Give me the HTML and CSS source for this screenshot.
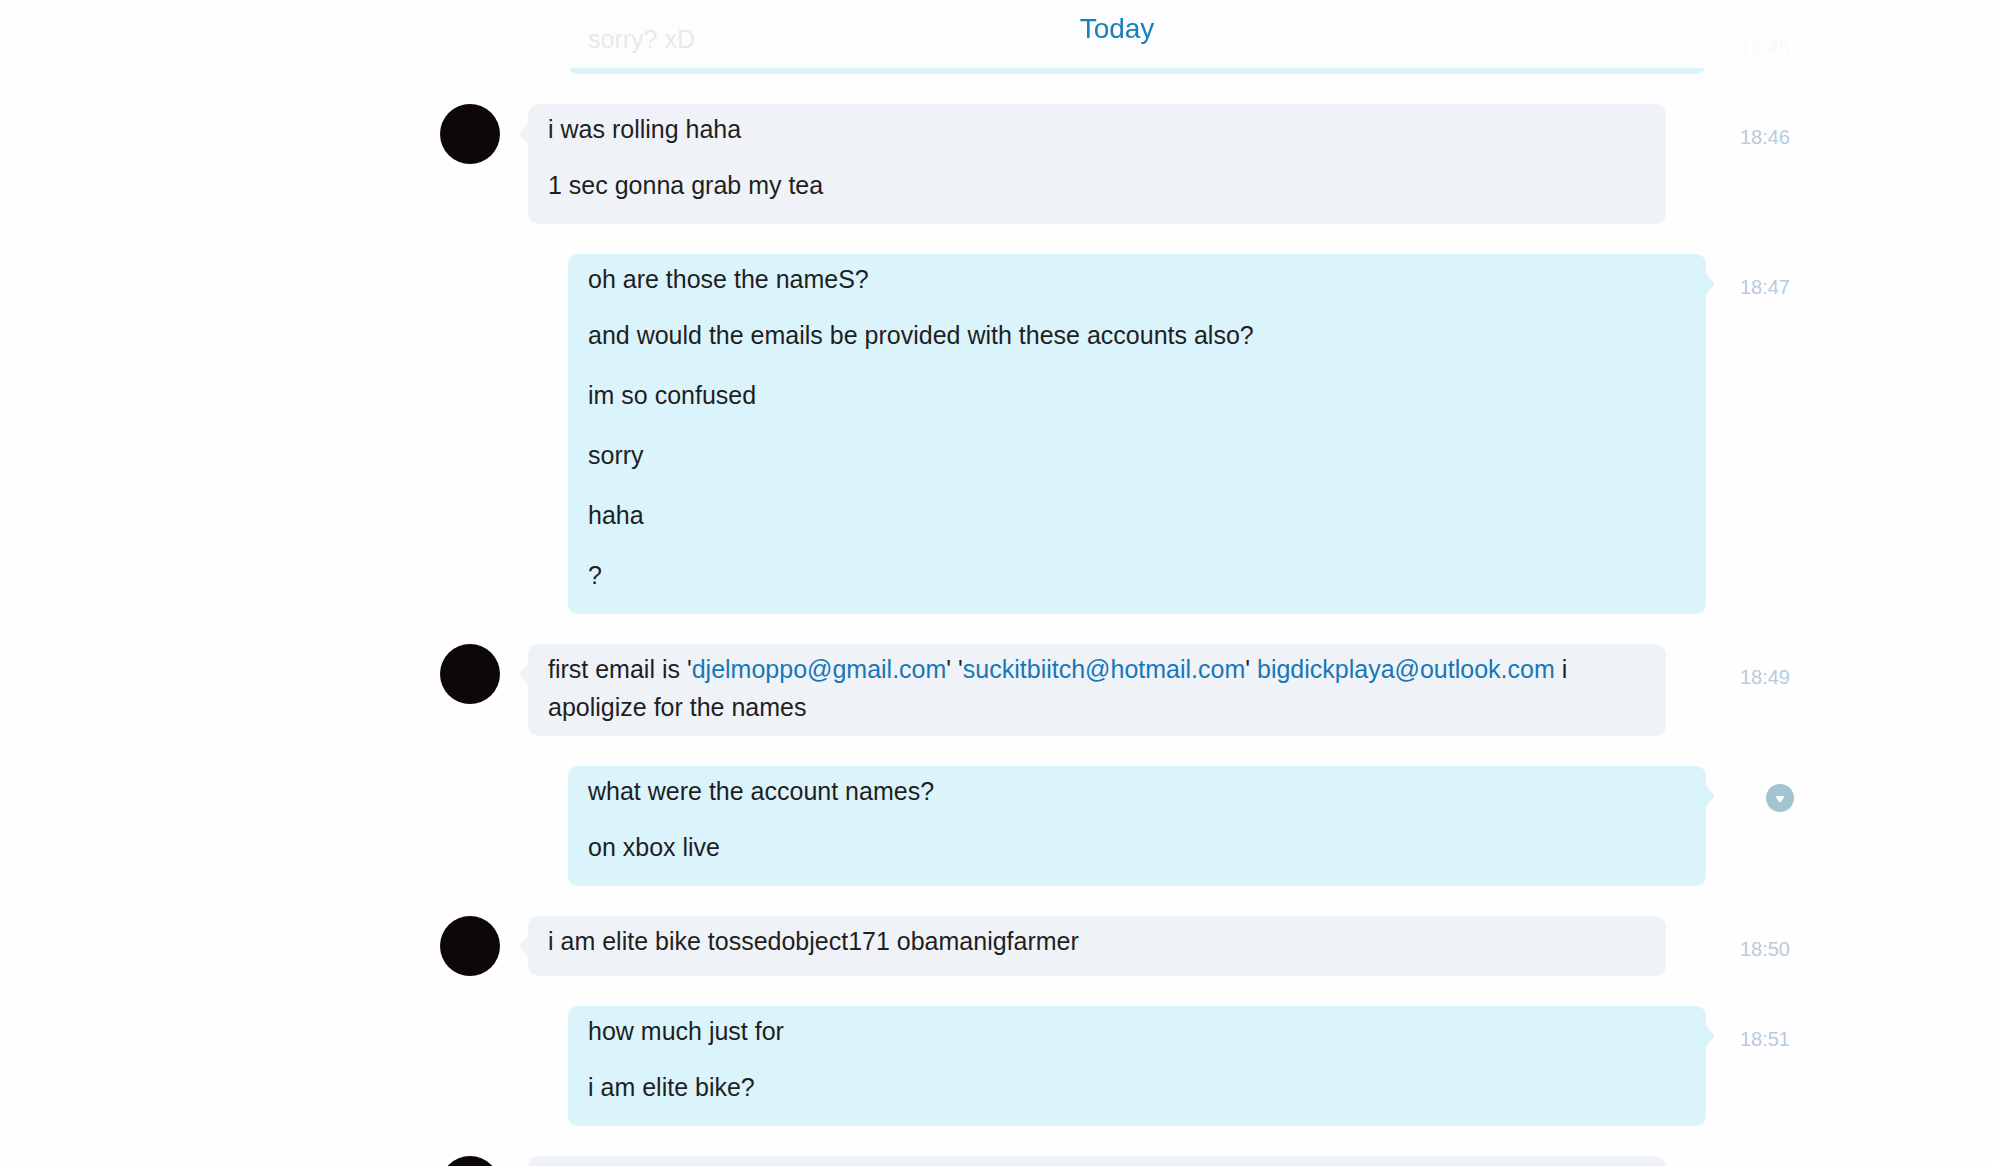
FILE: index.html
```html
<!DOCTYPE html>
<html lang="en">
<head>
<meta charset="utf-8">
<meta name="viewport" content="width=device-width, initial-scale=1">
<title>Conversation</title>
<link rel="stylesheet" href="styles.css">
</head>
<body>
<main class="chat">
  <header class="day"><h1 class="day-label">Today</h1></header>

  <section class="turn mine">
    <div class="bubble">
      <svg class="tail" viewBox="0 0 8 32" aria-hidden="true"><path d="M0 0C0 5 1 8 4 10.500L6.500 13Q8 14.500 8 16Q8 17.500 6.500 19L4 21.500C1 24 0 27 0 32Z"/></svg>
      <p class="message">sorry? xD</p>
    </div>
    <time class="time">18:45</time>
  </section>

  <section class="turn theirs">
    <div class="avatar"></div>
    <div class="bubble">
      <svg class="tail" viewBox="0 0 8 32" aria-hidden="true"><path d="M8 0C8 5 7 8 4 10.500L1.500 13Q0 14.500 0 16Q0 17.500 1.500 19L4 21.500C7 24 8 27 8 32Z"/></svg>
      <p class="message">i was rolling haha</p>
      <p class="message">1 sec gonna grab my tea</p>
    </div>
    <time class="time">18:46</time>
  </section>

  <section class="turn mine">
    <div class="bubble">
      <svg class="tail" viewBox="0 0 8 32" aria-hidden="true"><path d="M0 0C0 5 1 8 4 10.500L6.500 13Q8 14.500 8 16Q8 17.500 6.500 19L4 21.500C1 24 0 27 0 32Z"/></svg>
      <p class="message">oh are those the nameS?</p>
      <p class="message">and would the emails be provided with these accounts also?</p>
      <p class="message">im so confused</p>
      <p class="message">sorry</p>
      <p class="message">haha</p>
      <p class="message">?</p>
    </div>
    <time class="time">18:47</time>
  </section>

  <section class="turn theirs">
    <div class="avatar"></div>
    <div class="bubble">
      <svg class="tail" viewBox="0 0 8 32" aria-hidden="true"><path d="M8 0C8 5 7 8 4 10.500L1.500 13Q0 14.500 0 16Q0 17.500 1.500 19L4 21.500C7 24 8 27 8 32Z"/></svg>
      <p class="message">first email is '<a href="mailto:djelmoppo@gmail.com">djelmoppo@gmail.com</a>' '<a href="mailto:suckitbiitch@hotmail.com">suckitbiitch@hotmail.com</a>' <a href="mailto:bigdickplaya@outlook.com">bigdickplaya@outlook.com</a> i apoligize for the names</p>
    </div>
    <time class="time">18:49</time>
  </section>

  <section class="turn mine">
    <div class="bubble">
      <svg class="tail" viewBox="0 0 8 32" aria-hidden="true"><path d="M0 0C0 5 1 8 4 10.500L6.500 13Q8 14.500 8 16Q8 17.500 6.500 19L4 21.500C1 24 0 27 0 32Z"/></svg>
      <p class="message">what were the account names?</p>
      <p class="message">on xbox live</p>
    </div>
    <button class="menu" type="button" aria-label="Message options">
      <svg class="menu-icon" viewBox="0 0 28 28" aria-hidden="true"><path d="M10 12h8v1l-3 5h-2l-3-5z"/></svg>
    </button>
  </section>

  <section class="turn theirs">
    <div class="avatar"></div>
    <div class="bubble">
      <svg class="tail" viewBox="0 0 8 32" aria-hidden="true"><path d="M8 0C8 5 7 8 4 10.500L1.500 13Q0 14.500 0 16Q0 17.500 1.500 19L4 21.500C7 24 8 27 8 32Z"/></svg>
      <p class="message">i am elite bike tossedobject171 obamanigfarmer</p>
    </div>
    <time class="time">18:50</time>
  </section>

  <section class="turn mine">
    <div class="bubble">
      <svg class="tail" viewBox="0 0 8 32" aria-hidden="true"><path d="M0 0C0 5 1 8 4 10.500L6.500 13Q8 14.500 8 16Q8 17.500 6.500 19L4 21.500C1 24 0 27 0 32Z"/></svg>
      <p class="message">how much just for</p>
      <p class="message">i am elite bike?</p>
    </div>
    <time class="time">18:51</time>
  </section>

  <section class="turn theirs">
    <div class="avatar"></div>
    <div class="bubble">
      <p class="message"></p>
    </div>
  </section>
</main>
</body>
</html>
```

FILE: styles.css
```css
* {
  box-sizing: border-box;
}

body {
  margin: 0;
  background: #fefefe;
  color: #1f1f1f;
  font-family: "Liberation Sans", Arial, Helvetica, sans-serif;
  font-size: 25px;
  line-height: 38px;
}

.chat {
  display: flex;
  flex-direction: column;
  gap: 30px;
  height: 100vh;
  overflow: hidden;
  padding: 14px 200px 0 440px;
}

/* Translucent date bar pinned over the scrolling conversation */
.day {
  position: fixed;
  inset: 0 0 auto 0;
  z-index: 1;
  height: 68px;
  padding: 10px 200px 0 440px;
  background: rgba(254, 254, 254, 0.9);
  text-align: center;
}

.day-label {
  margin: 0;
  color: #1a7fb5;
  font-size: 28px;
  font-weight: 400;
  line-height: 38px;
}

.turn {
  display: flex;
  flex: none;
  align-items: flex-start;
}

.avatar {
  flex: none;
  width: 60px;
  height: 60px;
  margin-right: 28px;
  border-radius: 50%;
  background: #0d070b;
}

.bubble {
  position: relative;
  flex: 1;
  min-width: 0;
  padding: 0 20px;
  border-radius: 10px;
}

.theirs .bubble {
  margin-right: 128px;
  background: #eff3f8;
  fill: #eff3f8;
}

.mine .bubble {
  margin-left: 128px;
  margin-right: 88px;
  background: #dbf4fc;
  fill: #dbf4fc;
}

.tail {
  position: absolute;
  top: 14px;
  width: 8px;
  height: 32px;
}

.theirs .tail {
  right: 100%;
}

.mine .tail {
  left: 100%;
}

.message {
  min-height: 60px;
  margin: 0;
  padding: 2px 0 10px;
}

.message:first-of-type {
  padding-top: 6px;
}

.message a {
  color: #1777b8;
  text-decoration: none;
}

.time {
  width: 56px;
  margin-left: -56px;
  padding: 18px 4px 0 0;
  color: #b9cbdc;
  font-size: 20px;
  line-height: 30px;
  text-align: right;
}

.menu {
  width: 28px;
  height: 28px;
  margin: 18px 0 0 -28px;
  padding: 0;
  border: 0;
  border-radius: 50%;
  background: #a3c5d1;
  cursor: pointer;
}

.menu-icon {
  display: block;
  width: 28px;
  height: 28px;
  fill: #fff;
}
```
